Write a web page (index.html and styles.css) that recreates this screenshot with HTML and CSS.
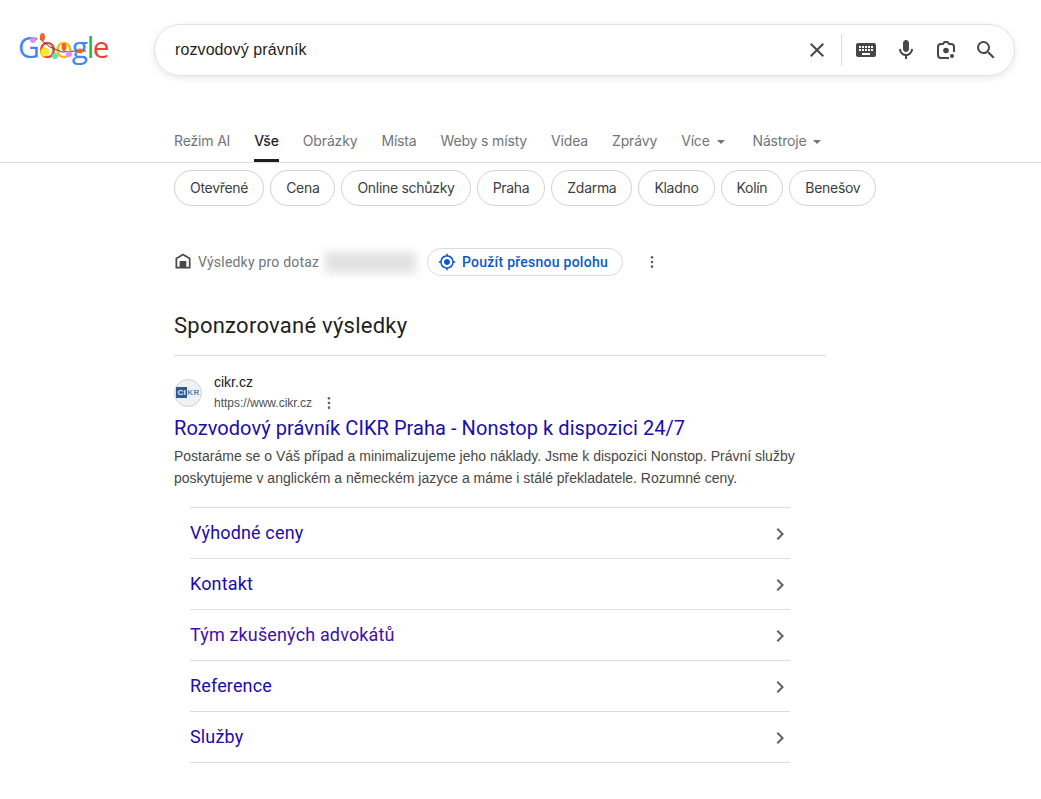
FILE: index.html
```html
<!DOCTYPE html>
<html lang="cs">
<head>
    <meta charset="UTF-8">
    <meta name="viewport" content="width=device-width, initial-scale=1.0">
    <title>rozvodový právník - Hledat Googlem</title>
    <link rel="stylesheet" href="styles.css">
</head>
<body>
    <header class="top-bar">
        <a class="logo">
            <span class="c-blue">G</span><span class="c-red">o</span><span class="c-yellow">o</span><span class="c-blue">g</span><span class="c-green">l</span><span class="c-red">e</span>
            <svg class="logo-lights" viewBox="0 0 90 36" width="90" height="36">
                <path d="M22 7l10 8 12 5 14-1 10 0" fill="none" stroke="#444" stroke-width="1"/>
                <ellipse cx="24.500" cy="5" rx="2.500" ry="4" fill="#f4622a"/>
                <circle cx="15" cy="8" r="3" fill="#e58cf0"/>
                <circle cx="27" cy="20" r="4.500" fill="#fbe92e"/>
                <circle cx="37" cy="24" r="3" fill="#5fe3b8"/>
                <ellipse cx="46" cy="15" rx="2.500" ry="4" fill="#f4622a"/>
                <circle cx="51" cy="22" r="3" fill="#e58cf0"/>
                <ellipse cx="62" cy="19" rx="3" ry="2.500" fill="#f4622a"/>
            </svg>
        </a>
        <div class="search-box">
            <span class="query">rozvodový právník</span>
            <div class="search-icons">
                <svg class="icon" viewBox="0 0 24 24"><path d="M19 6.41L17.59 5 12 10.59 6.41 5 5 6.41 10.59 12 5 17.59 6.41 19 12 13.41 17.59 19 19 17.59 13.41 12z"/></svg>
                <span class="divider"></span>
                <svg class="icon" viewBox="0 0 24 24"><path d="M20 5H4c-1.1 0-1.99.9-1.99 2L2 17c0 1.1.9 2 2 2h16c1.1 0 2-.9 2-2V7c0-1.1-.9-2-2-2zm-9 3h2v2h-2V8zm0 3h2v2h-2v-2zM8 8h2v2H8V8zm0 3h2v2H8v-2zm-1 2H5v-2h2v2zm0-3H5V8h2v2zm9 7H8v-2h8v2zm0-4h-2v-2h2v2zm0-3h-2V8h2v2zm3 3h-2v-2h2v2zm0-3h-2V8h2v2z"/></svg>
                <svg class="icon" viewBox="0 0 24 24"><path d="M12 14c1.66 0 3-1.34 3-3V5c0-1.66-1.34-3-3-3S9 3.34 9 5v6c0 1.66 1.34 3 3 3z"/><path d="M17 11c0 2.76-2.24 5-5 5s-5-2.24-5-5H5c0 3.53 2.61 6.43 6 6.92V21h2v-3.08c3.39-.49 6-3.39 6-6.92h-2z"/></svg>
                <svg class="icon" viewBox="0 0 24 24"><path class="lens-outline" d="M15 20H7a3 3 0 0 1-3-3V9a3 3 0 0 1 3-3h2l1.500-2h3L15 6h2a3 3 0 0 1 3 3v5"/><circle cx="12" cy="12.500" r="2.800"/><circle cx="18" cy="18" r="2"/></svg>
                <svg class="icon" viewBox="0 0 24 24"><path d="M15.5 14h-.79l-.28-.27A6.471 6.471 0 0 0 16 9.5 6.5 6.5 0 1 0 9.5 16c1.61 0 3.09-.59 4.23-1.57l.27.28v.79l5 4.99L20.49 19l-4.99-5zm-6 0C7.01 14 5 11.99 5 9.5S7.01 5 9.5 5 14 7.01 14 9.5 11.99 14 9.5 14z"/></svg>
            </div>
        </div>
    </header>

    <nav class="tabs">
        <a class="tab">Režim AI</a>
        <a class="tab active">Vše</a>
        <a class="tab">Obrázky</a>
        <a class="tab">Místa</a>
        <a class="tab">Weby s místy</a>
        <a class="tab">Videa</a>
        <a class="tab">Zprávy</a>
        <a class="tab">Více <span class="caret"></span></a>
        <a class="tab tools">Nástroje <span class="caret"></span></a>
    </nav>

    <div class="chips">
        <a class="chip">Otevřené</a>
        <a class="chip">Cena</a>
        <a class="chip">Online schůzky</a>
        <a class="chip">Praha</a>
        <a class="chip">Zdarma</a>
        <a class="chip">Kladno</a>
        <a class="chip">Kolín</a>
        <a class="chip">Benešov</a>
    </div>

    <div class="location">
        <svg class="home-icon" viewBox="0 0 24 24"><path d="M12 3L3 8.500V21h18V8.500zm7 16h-3v-7H8v7H5V9.600l7-4.300 7 4.300z"/></svg>
        <span class="location-label">Výsledky pro dotaz</span>
        <span class="blurred"></span>
        <a class="location-btn">
            <svg class="target-icon" viewBox="0 0 24 24"><path d="M12 8c-2.21 0-4 1.79-4 4s1.79 4 4 4 4-1.79 4-4-1.79-4-4-4zm8.94 3A8.994 8.994 0 0 0 13 3.06V1h-2v2.06A8.994 8.994 0 0 0 3.06 11H1v2h2.06A8.994 8.994 0 0 0 11 20.94V23h2v-2.06A8.994 8.994 0 0 0 20.94 13H23v-2h-2.06zM12 19c-3.87 0-7-3.13-7-7s3.13-7 7-7 7 3.13 7 7-3.13 7-7 7z"/></svg>
            Použít přesnou polohu
        </a>
        <svg class="dots location-dots" viewBox="0 0 24 24"><circle cx="12" cy="5" r="2"/><circle cx="12" cy="12" r="2"/><circle cx="12" cy="19" r="2"/></svg>
    </div>

    <main class="results">
        <h2 class="sponsored">Sponzorované výsledky</h2>

        <article class="ad">
            <div class="ad-source">
                <span class="favicon"><b>CI</b>KR</span>
                <div class="source-text">
                    <div class="site-name">cikr.cz</div>
                    <div class="site-url">https://www.cikr.cz
                        <svg class="dots" viewBox="0 0 24 24"><circle cx="12" cy="5" r="2"/><circle cx="12" cy="12" r="2"/><circle cx="12" cy="19" r="2"/></svg>
                    </div>
                </div>
            </div>
            <a class="ad-title">Rozvodový právník CIKR Praha - Nonstop k dispozici 24/7</a>
            <p class="ad-desc">Postaráme se o Váš případ a minimalizujeme jeho náklady. Jsme k dispozici Nonstop. Právní služby poskytujeme v anglickém a německém jazyce a máme i stálé překladatele. Rozumné ceny.</p>

            <ul class="sitelinks">
                <li><a>Výhodné ceny</a><svg class="chevron" viewBox="0 0 24 24"><path d="M10 6L8.59 7.41 13.17 12l-4.58 4.59L10 18l6-6z"/></svg></li>
                <li><a>Kontakt</a><svg class="chevron" viewBox="0 0 24 24"><path d="M10 6L8.59 7.41 13.17 12l-4.58 4.59L10 18l6-6z"/></svg></li>
                <li><a class="visited">Tým zkušených advokátů</a><svg class="chevron" viewBox="0 0 24 24"><path d="M10 6L8.59 7.41 13.17 12l-4.58 4.59L10 18l6-6z"/></svg></li>
                <li><a>Reference</a><svg class="chevron" viewBox="0 0 24 24"><path d="M10 6L8.59 7.41 13.17 12l-4.58 4.59L10 18l6-6z"/></svg></li>
                <li><a>Služby</a><svg class="chevron" viewBox="0 0 24 24"><path d="M10 6L8.59 7.41 13.17 12l-4.58 4.59L10 18l6-6z"/></svg></li>
            </ul>
        </article>
    </main>
</body>
</html>
```

FILE: styles.css
```css
body {
    font-family: "Liberation Sans", Arial, sans-serif;
    margin: 0;
    color: #202124;
    background: #fff;
}

.top-bar {
    display: flex;
    align-items: center;
    padding: 24px 26px 0 18px;
}

.logo {
    position: relative;
    display: block;
    width: 136px;
    height: 52px;
    font-family: "Open Sans", sans-serif;
    font-size: 30px;
    font-weight: 500;
    line-height: 46px;
    letter-spacing: -1.4px;
}

.logo-lights {
    position: absolute;
    left: 0;
    top: 8px;
}

.c-blue { color: #4285f4; }
.c-red { color: #ea4335; }
.c-yellow { color: #fbbc05; }
.c-green { color: #34a853; }

.search-box {
    flex: 1;
    display: flex;
    align-items: center;
    justify-content: space-between;
    height: 50px;
    padding-left: 20px;
    border: 1px solid #dfe1e5;
    border-radius: 26px;
    box-shadow: 0 2px 6px rgba(64,60,67,0.12);
}

.query {
    font-size: 16px;
    letter-spacing: 0.1px;
    color: #1f1f1f;
}

.search-icons {
    display: flex;
    align-items: center;
    gap: 16px;
    padding-right: 16px;
}

.icon {
    width: 24px;
    height: 24px;
    fill: #474747;
}

.lens-outline {
    fill: none;
    stroke: #474747;
    stroke-width: 2;
}

.divider {
    width: 1px;
    height: 32px;
    margin: 0 -4px;
    background: #dadce0;
}

.tabs {
    display: flex;
    gap: 24px;
    height: 39px;
    margin-top: 47px;
    padding-left: 174px;
    border-bottom: 1px solid #dadce0;
}

.tab {
    position: relative;
    font-family: Inter, sans-serif;
    font-size: 14px;
    line-height: 36px;
    letter-spacing: -0.16px;
    color: #70757a;
}

.tab.active {
    color: #1f1f1f;
    font-weight: 500;
    border-bottom: 3px solid #1f1f1f;
    height: 36px;
}

.tab.tools {
    margin-left: 4px;
}

.caret {
    display: inline-block;
    margin-left: 3px;
    vertical-align: middle;
    border-top: 4px solid #70757a;
    border-left: 4px solid transparent;
    border-right: 4px solid transparent;
}

.chips {
    display: flex;
    gap: 6px;
    margin-top: 7px;
    padding-left: 174px;
}

.chip {
    height: 34px;
    padding: 0 15px;
    border: 1px solid #d2d2d2;
    border-radius: 18px;
    font-family: Inter, sans-serif;
    font-size: 14px;
    line-height: 34px;
    letter-spacing: -0.3px;
    color: #3c4043;
}

.location {
    display: flex;
    align-items: center;
    height: 28px;
    margin-top: 42px;
    padding-left: 174px;
    font-family: Roboto, sans-serif;
    font-size: 14px;
    letter-spacing: 0.2px;
    color: #70757a;
}

.home-icon {
    width: 20px;
    height: 20px;
    margin: 0 5px 2px -1px;
    fill: #474747;
}

.location-label {
    width: 121px;
    white-space: nowrap;
}

.blurred {
    width: 91px;
    height: 21px;
    margin: 0 11px 0 6px;
    background: #e2e2e2;
    filter: blur(4px);
}

.location-btn {
    display: flex;
    align-items: center;
    gap: 6px;
    height: 26px;
    padding: 0 14px 0 10px;
    border: 1px solid #dadce0;
    border-radius: 14px;
    font-weight: 500;
    letter-spacing: 0.25px;
    color: #0b57d0;
}

.target-icon {
    width: 18px;
    height: 18px;
    fill: #0b57d0;
}

.dots {
    width: 16px;
    height: 16px;
    fill: #5f6368;
}

.location-dots {
    margin-left: 21px;
}

.results {
    width: 652px;
    margin-left: 174px;
}

.sponsored {
    margin: 36px 0 0;
    padding-bottom: 15px;
    border-bottom: 1px solid #dadce0;
    font-family: Roboto, sans-serif;
    font-size: 22px;
    font-weight: 400;
    line-height: 28px;
    letter-spacing: 0.25px;
    color: #1f1f1f;
}

.ad-source {
    display: flex;
    align-items: center;
    gap: 12px;
    margin-top: 16px;
}

.favicon {
    width: 26px;
    height: 26px;
    border: 1px solid #d2d2d2;
    border-radius: 50%;
    background: #eef1f5;
    font-size: 8px;
    font-weight: bold;
    line-height: 26px;
    letter-spacing: 0.4px;
    text-align: center;
    color: #5f7fae;
}

.favicon b {
    padding: 1px;
    background: #2b5a94;
    color: #eef1f5;
}

.site-name {
    font-size: 14px;
    line-height: 20px;
    color: #202124;
}

.site-url {
    display: flex;
    align-items: center;
    gap: 9px;
    margin-top: 1px;
    font-size: 12px;
    line-height: 20px;
    color: #4d5156;
}

.ad-title {
    display: block;
    margin-top: 2px;
    font-family: Roboto, sans-serif;
    font-size: 20px;
    line-height: 26px;
    letter-spacing: 0.06px;
    color: #1a0dab;
}

.ad-desc {
    margin: 4px 0 0;
    width: 640px;
    font-size: 14px;
    line-height: 22px;
    color: #474747;
}

.sitelinks {
    list-style: none;
    margin: 18px 36px 0 16px;
    padding: 0;
    border-top: 1px solid #dadce0;
}

.sitelinks li {
    display: flex;
    align-items: center;
    justify-content: space-between;
    height: 50px;
    border-bottom: 1px solid #dadce0;
    font-family: Roboto, sans-serif;
    font-size: 18px;
    letter-spacing: 0.15px;
    color: #1a0dab;
}

.sitelinks a {
    margin-bottom: 2px;
}

.sitelinks .visited {
    color: #420fa8;
}

.chevron {
    width: 24px;
    height: 24px;
    margin: 1px -2px 0 0;
    fill: #5f6368;
}
```
